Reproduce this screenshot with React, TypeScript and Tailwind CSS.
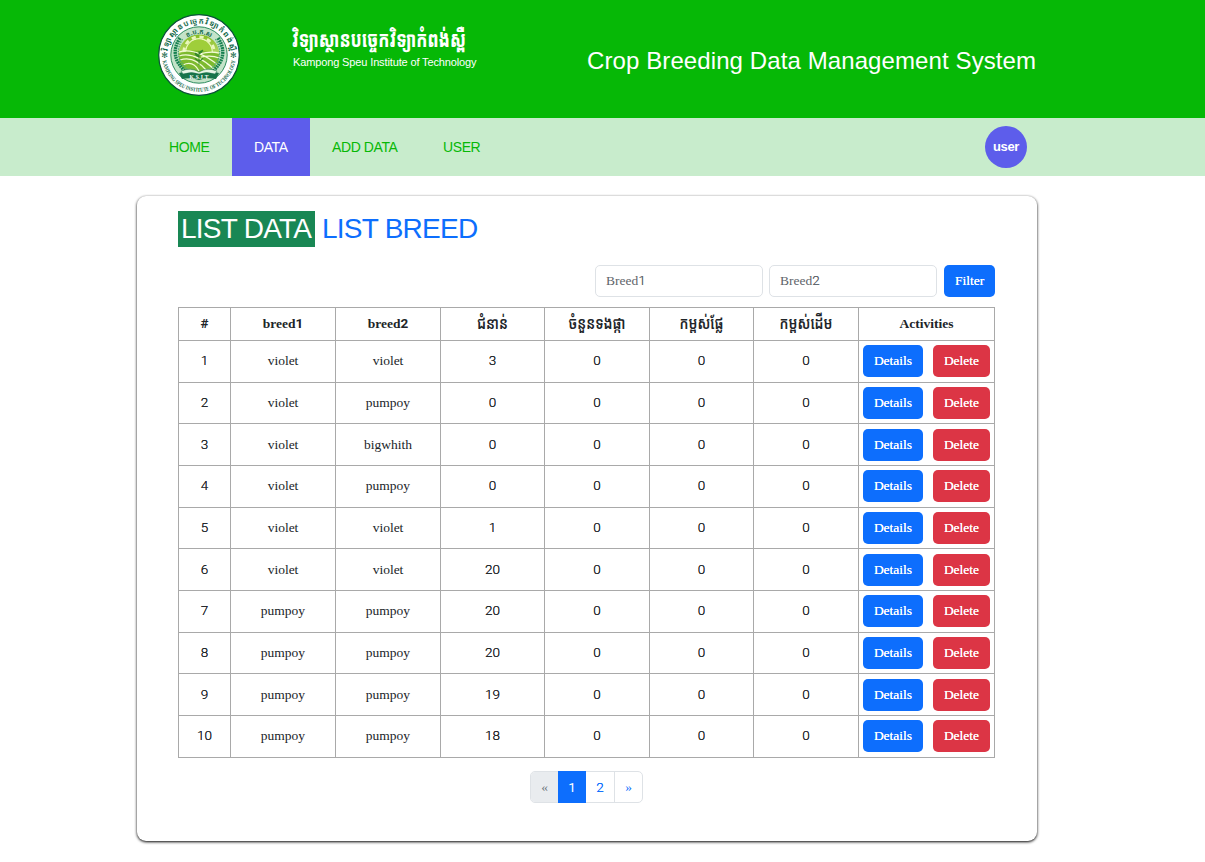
import React from "react";

const KHMER = "font-['Noto_Sans_Khmer','Noto_Sans',sans-serif]";

type Row = { breed1: string; breed2: string; generation: number };

const rows: Row[] = [
  { breed1: "violet", breed2: "violet", generation: 3 },
  { breed1: "violet", breed2: "pumpoy", generation: 0 },
  { breed1: "violet", breed2: "bigwhith", generation: 0 },
  { breed1: "violet", breed2: "pumpoy", generation: 0 },
  { breed1: "violet", breed2: "violet", generation: 1 },
  { breed1: "violet", breed2: "violet", generation: 20 },
  { breed1: "pumpoy", breed2: "pumpoy", generation: 20 },
  { breed1: "pumpoy", breed2: "pumpoy", generation: 20 },
  { breed1: "pumpoy", breed2: "pumpoy", generation: 19 },
  { breed1: "pumpoy", breed2: "pumpoy", generation: 18 },
];

const rowHeights = [
  "h-[42px]",
  "h-[41px]",
  "h-[42px]",
  "h-[42px]",
  "h-[41px]",
  "h-[42px]",
  "h-[42px]",
  "h-[41px]",
  "h-[42px]",
  "h-[42px]",
];

const border = "border-r border-b border-[#a9a9a9] text-center align-middle leading-none";
const headCell = `${border} p-0`;

function Digits({ children }: { children: React.ReactNode }) {
  return <span className="font-['Roboto',sans-serif] text-[13.5px]">{children}</span>;
}

function LightDigits({ children }: { children: React.ReactNode }) {
  return <span className="font-['Roboto',sans-serif] text-[13.5px] font-light text-shadow-[0_0_0.5px_currentColor]">{children}</span>;
}

function Seal() {
  return (
    <svg viewBox="0 0 82 82" className="h-[82px] w-[82px] shrink-0" aria-hidden="true">
      <defs>
        <linearGradient id="core" x1="0" y1="0" x2="0" y2="1">
          <stop offset="0" stopColor="#86bd22" />
          <stop offset="0.5" stopColor="#b9d96a" />
          <stop offset="1" stopColor="#5da82a" />
        </linearGradient>
        <path id="arcTop" d="M9.6 46.4 A31.800 31.800 0 1 1 72.4 46.4" />
        <path id="arcInner" d="M20.5 34 A22 22 0 0 1 61.5 34" />
        <path id="arcBottom" d="M4.4 45.5 A36.9 36.9 0 0 0 77.6 45.5" />
      </defs>
      <circle cx="41" cy="41" r="40.3" fill="#fff" stroke="#0a5138" strokeWidth="1.2" />
      <circle cx="41" cy="41" r="28.2" fill="#c4e3c9" stroke="#17814e" strokeWidth="0.9" />
      <circle cx="41" cy="41" r="20.5" fill="url(#core)" />
      <g fill="none" stroke="#eaf7bd">
        <circle cx="41" cy="38" r="13.2" strokeWidth="1.4" />
        <circle cx="41" cy="38" r="15.2" strokeWidth="2.8" strokeDasharray="4.2 3.76" />
      </g>
      <circle cx="41" cy="38" r="12.6" fill="#9fce3a" />
      <path d="M21 40 Q34 33 61 40 L60 49 Q42 60 22 51Z" fill="#7dba2f" />
      <g fill="none" stroke="#f3fbd8" strokeWidth="1.2">
        <path d="M21 38 Q37 33 60 51" />
        <path d="M21 42 Q36 37 56 55" />
        <path d="M22 46 Q36 41 49 57" />
        <path d="M25 51 Q35 46 41 57" />
        <path d="M41 40 Q53 37 61 39" />
        <path d="M43 43 Q54 41 61 44" />
      </g>
      <path
        d="M41 51V37M41 43q-4-1-4-4 4 1 4 4M41 40q3-1 4-4-4 1-4 4M41 47q-4-1-4-3M41 47q4-1 4-3"
        fill="#398c2a"
        stroke="#287d29"
        strokeWidth="0.7"
      />
      <g fill="none" stroke="#168050" strokeWidth="3.4" strokeDasharray="1.8 0.7">
        <path d="M22 24 Q10 42 28 58" />
        <path d="M60 24 Q72 42 54 58" />
      </g>
      <g fill="none" stroke="#4ba875" strokeWidth="1.3" strokeDasharray="1.5 1">
        <path d="M24.5 25 Q14 42 30 56" />
        <path d="M57.5 25 Q68 42 52 56" />
      </g>
      <path d="M21 59Q31 56 41 60Q51 56 61 59L58 65Q49 63 41 66Q33 63 24 65Z" fill="#17734a" />
      <path
        d="M23 57Q33 53 41 58Q49 53 59 57L57 60Q48 57 41 60Q34 57 25 60Z"
        fill="#e7f4e6"
        stroke="#17734a"
        strokeWidth="0.5"
      />
      <text x="41" y="65" textAnchor="middle" fill="#fff" fontFamily="Liberation Serif" fontSize="5.5" fontWeight="700" textLength="19">
        K.S.I.T
      </text>
      <g fill="#12694a" fontWeight="700">
        <text fontSize="7.6" fontFamily="Noto Sans Khmer, Noto Sans, sans-serif">
          <textPath href="#arcTop" startOffset="50%" textAnchor="middle" textLength="92">
            វិទ្យាស្ថានបច្ចេកវិទ្យាកំពង់ស្ពឺ
          </textPath>
        </text>
        <text fontSize="6.5" fontFamily="Noto Sans Khmer, Noto Sans, sans-serif">
          <textPath href="#arcInner" startOffset="50%" textAnchor="middle">
            ខ.ប.ក.ស
          </textPath>
        </text>
        <text fontSize="5.8" fontFamily="Liberation Serif">
          <textPath href="#arcBottom" startOffset="50%" textAnchor="middle" textLength="104" lengthAdjust="spacingAndGlyphs">
            KAMPONG SPEU INSTITUTE OF TECHNOLOGY
          </textPath>
        </text>
        <text x="6.6" y="43.8" fontSize="8" textAnchor="middle" fontFamily="DejaVu Sans">✻</text>
        <text x="75.4" y="43.8" fontSize="8" textAnchor="middle" fontFamily="DejaVu Sans">✻</text>
      </g>
    </svg>
  );
}

function Header() {
  return (
    <header className="flex h-[118px] bg-[#06b806] pl-[158px] text-white">
      <div className="pt-[14px]">
        <Seal />
      </div>
      <div className="ml-[53px] w-[294px] pt-[25px]">
        <div className="h-[30px]">
          <p
            className={`${KHMER} w-[171px] origin-top-left -translate-x-px -translate-y-[6px] scale-y-[1.32] text-[16.2px] leading-[30px] font-extrabold whitespace-nowrap`}
          >
            វិទ្យាស្ថានបច្ចេកវិទ្យាកំពង់ស្ពឺ
          </p>
        </div>
        <p className="text-[11px] leading-[15px] tracking-[-0.13px] whitespace-nowrap">
          Kampong Speu Institute of Technology
        </p>
      </div>
      <h1 className="pt-[43px] text-[24px] leading-9 tracking-[0.1px] whitespace-nowrap">
        Crop Breeding Data Management System
      </h1>
    </header>
  );
}

function Nav() {
  return (
    <nav className="flex h-[58px] items-center bg-[#c8eccc] pl-[147px] text-[14px] tracking-[-0.4px] text-[#06b806]">
      <a className="flex h-full w-[85px] items-center pl-[22px]">HOME</a>
      <a className="flex h-full w-[78px] items-center bg-[#5d5deb] pl-[22px] text-white">DATA</a>
      <a className="flex h-full w-[111px] items-center pl-[22px] whitespace-nowrap">ADD DATA</a>
      <a className="flex h-full items-center pl-[22px]">USER</a>
      <div className="mr-[178px] ml-auto flex size-[42px] items-center justify-center rounded-full bg-[#5d5deb] text-[13px] font-bold text-white">
        user
      </div>
    </nav>
  );
}

function BreedTable() {
  const khmerHeads = ["ជំនាន់", "ចំនួនទងផ្កា", "កម្ពស់ផ្លែ", "កម្ពស់ដើម"];
  return (
    <table className="mt-[10px] w-[817px] table-fixed border-separate border-spacing-0 border-t border-l border-[#a9a9a9]">
      <colgroup>
        <col className="w-[52px]" />
        <col className="w-[105px]" />
        <col className="w-[105px]" />
        <col className="w-[104px]" />
        <col className="w-[105px]" />
        <col className="w-[104px]" />
        <col className="w-[105px]" />
        <col className="w-[136px]" />
      </colgroup>
      <thead>
        <tr className="h-[33px] font-bold">
          <th className={headCell}><Digits>#</Digits></th>
          <th className={headCell}>breed<Digits>1</Digits></th>
          <th className={headCell}>breed<Digits>2</Digits></th>
          {khmerHeads.map((h) => (
            <th key={h} className={`${headCell} ${KHMER} text-[13.5px] font-semibold whitespace-nowrap`}>
              <span className="inline-block scale-y-[1.22]">{h}</span>
            </th>
          ))}
          <th className={headCell}>Activities</th>
        </tr>
      </thead>
      <tbody>
        {rows.map((r, i) => {
          const cell = `${border} px-0 ${i % 3 === 2 ? "pt-px pb-0" : "pt-0 pb-px"}`;
          return (
            <tr key={i} className={rowHeights[i]}>
              <td className={cell}><LightDigits>{i + 1}</LightDigits></td>
              <td className={cell}>{r.breed1}</td>
              <td className={cell}>{r.breed2}</td>
              <td className={cell}><LightDigits>{r.generation}</LightDigits></td>
              <td className={cell}><LightDigits>0</LightDigits></td>
              <td className={cell}><LightDigits>0</LightDigits></td>
              <td className={cell}><LightDigits>0</LightDigits></td>
              <td className={cell}>
                <div className="flex gap-[10px] pl-1">
                  <button className="h-8 w-[60px] rounded-[5px] bg-[#0d6efd] text-white text-shadow-[0_0_0.5px_#fff]">Details</button>
                  <button className="h-8 w-[57px] rounded-[5px] bg-[#dc3545] text-white text-shadow-[0_0_0.5px_#fff]">Delete</button>
                </div>
              </td>
            </tr>
          );
        })}
      </tbody>
    </table>
  );
}

export default function App() {
  return (
    <div className="h-[862px] overflow-hidden bg-white font-['Liberation_Sans',Arial,sans-serif]">
      <Header />
      <Nav />
      <main className="mt-[20px] ml-[137px] h-[645px] w-[900px] rounded-[9px] bg-white px-[41px] shadow-[0_1px_3px_#000]">
        <div className="flex items-center gap-[5px] pt-[15px] text-[28px] leading-9 tracking-[-0.75px]">
          <span className="h-9 w-[137px] bg-[#198754] pl-[3px] whitespace-nowrap text-white">LIST DATA</span>
          <span className="pl-[2px] text-[#0d6efd]">LIST BREED</span>
        </div>
        <div className="font-['Liberation_Serif',serif] text-[13.5px] text-[#212529]">
          <form className="mt-[18px] flex w-[817px] justify-end text-[#5f656b]">
            <div className="mr-[6px] flex h-8 w-[168px] items-center rounded-[5px] border border-[#dee2e6] pl-[10px]">
              <span>Breed<LightDigits>1</LightDigits></span>
            </div>
            <div className="mr-[7px] flex h-8 w-[168px] items-center rounded-[5px] border border-[#dee2e6] pl-[10px]">
              <span>Breed<LightDigits>2</LightDigits></span>
            </div>
            <button type="button" className="h-8 w-[51px] rounded-[5px] bg-[#0d6efd] text-white text-shadow-[0_0_0.5px_#fff]">Filter</button>
          </form>
          <BreedTable />
          <div className="mt-[13px] ml-[352px] flex h-8 w-[113px] rounded-[5px] border border-[#dee2e6] text-[#0d6efd]">
            <span className="flex w-[27px] items-center justify-center rounded-l-[4px] bg-[#e9ecef] text-[#6c757d]">«</span>
            <span className="-my-px flex w-7 items-center justify-center bg-[#0d6efd] text-white"><Digits>1</Digits></span>
            <span className="flex w-[29px] items-center justify-center border-r border-[#dee2e6]"><LightDigits>2</LightDigits></span>
            <span className="flex flex-1 items-center justify-center">»</span>
          </div>
        </div>
      </main>
    </div>
  );
}
